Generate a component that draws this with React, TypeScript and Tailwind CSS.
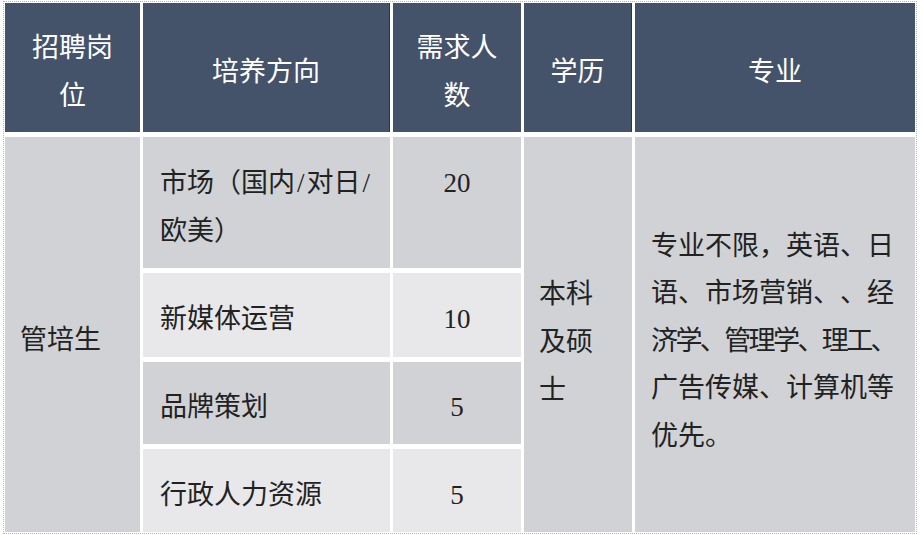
const font = { fontFamily: '"Liberation Serif", "Noto Sans CJK SC", serif' };

type Row = { dir: React.ReactNode; count: string; light: boolean; top?: boolean };

const rows: Row[] = [
  {
    dir: (
      <>
        市场（国内<span className="px-[2px]">/</span>对日<span className="px-[2px]">/</span>
        <br />
        欧美）
      </>
    ),
    count: "20",
    light: false,
    top: true,
  },
  { dir: "新媒体运营", count: "10", light: true },
  { dir: "品牌策划", count: "5", light: false },
  { dir: "行政人力资源", count: "5", light: true },
];

export default function App() {
  return (
    <div className="w-[923px] h-[535px] bg-white overflow-hidden pt-[1px] pl-[3px]" style={font}>
      <div className="w-[914px] border border-dotted border-[#b4b4b4] p-[1px]">
        <div className="grid grid-cols-[135px_247px_128px_108px_280px] grid-rows-[129px_131px_84px_82px_83px] gap-x-[3px] gap-y-[5px] text-[27px] leading-[48px] [text-spacing-trim:space-all]">
          {/* header */}
          <div className="bg-[#44536a] text-white flex items-center justify-center text-center px-[20px] pt-[8px]">
            招聘岗位
          </div>
          <div className="bg-[#44536a] text-white flex items-center justify-center pt-[8px] border-r border-[#2e3440]">
            培养方向
          </div>
          <div className="bg-[#44536a] text-white flex items-center justify-center text-center px-[12px] pt-[8px]">
            需求人数
          </div>
          <div className="bg-[#44536a] text-white flex items-center justify-center pt-[8px] border-r border-[#2e3440]">
            学历
          </div>
          <div className="bg-[#44536a] text-white flex items-center justify-center pt-[8px]">
            专业
          </div>

          {/* body */}
          <div className="row-start-2 row-span-4 col-start-1 bg-[#d0d2d6] text-[#222] flex items-center pl-[15px] pt-[10px]">
            管培生
          </div>

          {rows.map((r, i) => (
            <div key={i} className="contents">
              <div
                className={`col-start-2 ${r.light ? "bg-[#e8e8ea]" : "bg-[#d0d2d6]"} text-[#222] pl-[17px] flex whitespace-nowrap ${
                  r.top ? "items-start pt-[22px]" : "items-center pt-[8px]"
                }`}
                style={{ gridRowStart: i + 2 }}
              >
                <div>{r.dir}</div>
              </div>
              <div
                className={`col-start-3 ${r.light ? "bg-[#e8e8ea]" : "bg-[#d0d2d6]"} text-[#222] flex justify-center ${
                  r.top ? "items-start pt-[22px]" : "items-center pt-[8px]"
                }`}
                style={{ gridRowStart: i + 2 }}
              >
                {r.count}
              </div>
            </div>
          ))}

          <div className="row-start-2 row-span-4 col-start-4 bg-[#d0d2d6] text-[#222] flex items-center px-[15px] pt-[14px]">
            <div>本科及硕士</div>
          </div>

          <div className="row-start-2 row-span-4 col-start-5 bg-[#d0d2d6] text-[#222] flex items-center pl-[16px] pt-[14px] leading-[47.5px] whitespace-nowrap">
            <div>
              <div>专业不限，英语、日</div>
              <div>语、市场营销、、经</div>
              <div className="tracking-[-2.6px]">济学、管理学、理工、</div>
              <div>广告传媒、计算机等</div>
              <div>优先。</div>
            </div>
          </div>
        </div>
      </div>
    </div>
  );
}
